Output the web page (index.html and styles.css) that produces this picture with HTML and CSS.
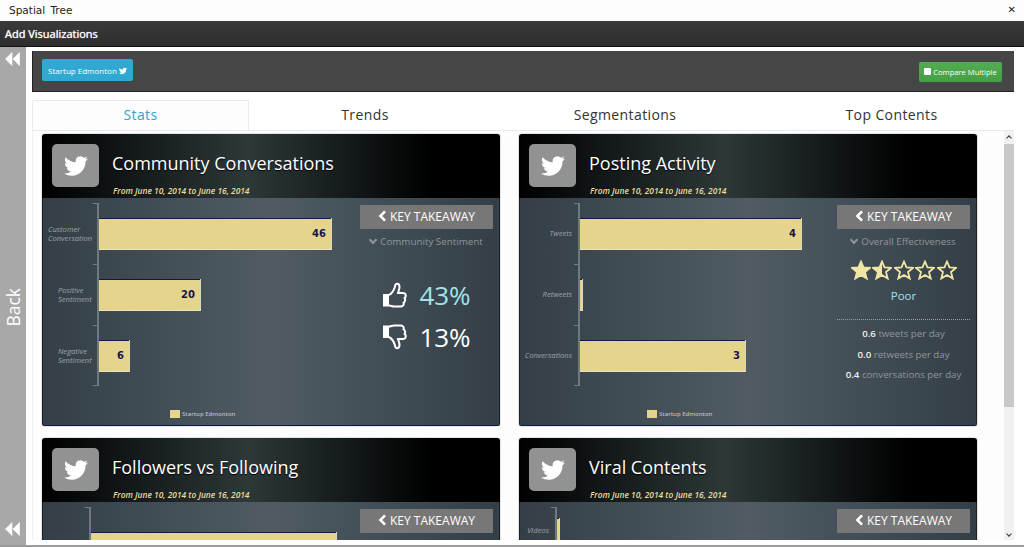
FILE: index.html
```html
<!doctype html>
<html lang="en">
<head>
  <title>Spatial Tree</title>
  <meta charset="utf-8" />
  <meta name="viewport" content="width=device-width,initial-scale=1" />
  <link rel="stylesheet" href="styles.css">
</head>
<body>
  <svg class="defs" width="0" height="0" aria-hidden="true">
    <symbol id="bird" viewBox="0 0 24 24">
      <path d="M23.953 4.57a10 10 0 01-2.825.775 4.958 4.958 0 002.163-2.723c-.951.555-2.005.959-3.127 1.184a4.92 4.92 0 00-8.384 4.482C7.69 8.095 4.067 6.13 1.64 3.162a4.822 4.822 0 00-.666 2.475c0 1.71.87 3.213 2.188 4.096a4.904 4.904 0 01-2.228-.616v.06a4.923 4.923 0 003.946 4.827 4.996 4.996 0 01-2.212.085 4.936 4.936 0 004.604 3.417 9.867 9.867 0 01-6.102 2.105c-.39 0-.779-.023-1.17-.067a13.995 13.995 0 007.557 2.209c9.053 0 13.998-7.496 13.998-13.985 0-.21 0-.42-.015-.63A9.935 9.935 0 0024 4.59z" fill="currentColor"/>
    </symbol>
    <symbol id="rewind" viewBox="0 0 15 14">
      <path d="M7 0.5 V13.5 L0.5 7 Z M14.5 0.5 V13.5 L8 7 Z" fill="currentColor" stroke="currentColor" stroke-width="0.6" stroke-linejoin="round"/>
    </symbol>
    <symbol id="chevron" viewBox="0 0 10 14">
      <path d="M8 1.5 L2.5 7 L8 12.5" fill="none" stroke="currentColor" stroke-width="3"/>
    </symbol>
    <symbol id="thumb" viewBox="0 0 25 26">
      <path d="M1 12 H7 V24.5 H1 Z" fill="currentColor"/>
      <path d="M7 13 C10 11.5 12 8 13 4.5 C13.3 0.8 17.5 1 17.5 5 C17.5 7.5 16.3 9.5 16 11 H21 C24 11 24.5 14.6 22.6 16 C23.8 18 22.8 20 21.6 20.6 C22.2 22.6 21 24.5 19 24.5 H12 C10 24.5 9 23.5 7 23.5" fill="none" stroke="currentColor" stroke-width="2"/>
    </symbol>
    <symbol id="star" viewBox="0 0 20 20">
      <polygon points="10,1.5 12.5,7.3 19,7.8 14,12 15.7,18.5 10,15 4.3,18.5 6,12 1,7.8 7.5,7.3" fill="none" stroke="currentColor" stroke-width="1.8"/>
    </symbol>
    <symbol id="star-half" viewBox="0 0 20 20">
      <polygon points="10,1.5 12.5,7.3 19,7.8 14,12 15.7,18.5 10,15 4.3,18.5 6,12 1,7.8 7.5,7.3" fill="none" stroke="currentColor" stroke-width="1.8"/>
      <polygon points="10,1.5 7.5,7.3 1,7.8 6,12 4.3,18.5 10,15" fill="currentColor"/>
    </symbol>
    <symbol id="star-full" viewBox="0 0 20 20">
      <polygon points="10,1.5 12.5,7.3 19,7.8 14,12 15.7,18.5 10,15 4.3,18.5 6,12 1,7.8 7.5,7.3" fill="currentColor" stroke="currentColor" stroke-width="1.8"/>
    </symbol>
  </svg>

  <header class="titlebar">
    <span>Spatial Tree</span>
    <span class="close">&#10005;</span>
  </header>
  <div class="addbar">Add Visualizations</div>

  <div class="window">
    <aside class="back">
      <svg class="rewind"><use href="#rewind"/></svg>
      <span class="back-label">Back</span>
      <svg class="rewind"><use href="#rewind"/></svg>
    </aside>

    <main class="content">
      <div class="toolbar">
        <button class="btn btn-blue">Startup Edmonton <svg class="btn-bird"><use href="#bird"/></svg></button>
        <button class="btn btn-green"><i class="check"></i>Compare Multiple</button>
      </div>

      <nav class="tabs">
        <a class="tab active">Stats</a>
        <a class="tab">Trends</a>
        <a class="tab">Segmentations</a>
        <a class="tab">Top Contents</a>
      </nav>

      <div class="scroller">
        <div class="cards">

          <section class="card">
            <div class="card-head">
              <div class="card-icon"><svg><use href="#bird"/></svg></div>
              <div>
                <h2>Community Conversations</h2>
                <p class="range">From June 10, 2014 to June 16, 2014</p>
              </div>
            </div>
            <div class="card-body">
              <div class="chart labels-55">
                <div class="row">
                  <span class="row-label">Customer Conversation</span>
                  <div class="plot"><div class="bar" style="width:232px"><b>46</b></div></div>
                </div>
                <div class="row">
                  <span class="row-label">Positive Sentiment</span>
                  <div class="plot"><div class="bar" style="width:101px"><b>20</b></div></div>
                </div>
                <div class="row">
                  <span class="row-label">Negative Sentiment</span>
                  <div class="plot"><div class="bar" style="width:30px"><b>6</b></div></div>
                </div>
                <div class="legend"><i></i>Startup Edmonton</div>
              </div>
              <div class="takeaway">
                <button class="key"><svg><use href="#chevron"/></svg>KEY TAKEAWAY</button>
                <div class="sub"><span class="caret"></span>Community Sentiment</div>
                <div class="votes">
                  <div class="vote up"><svg><use href="#thumb"/></svg><span>43%</span></div>
                  <div class="vote"><svg class="flip"><use href="#thumb"/></svg><span>13%</span></div>
                </div>
              </div>
            </div>
          </section>

          <section class="card">
            <div class="card-head">
              <div class="card-icon"><svg><use href="#bird"/></svg></div>
              <div>
                <h2>Posting Activity</h2>
                <p class="range">From June 10, 2014 to June 16, 2014</p>
              </div>
            </div>
            <div class="card-body">
              <div class="chart labels-59">
                <div class="row">
                  <span class="row-label">Tweets</span>
                  <div class="plot"><div class="bar" style="width:221px"><b>4</b></div></div>
                </div>
                <div class="row">
                  <span class="row-label">Retweets</span>
                  <div class="plot"><div class="bar" style="width:2px"></div></div>
                </div>
                <div class="row">
                  <span class="row-label">Conversations</span>
                  <div class="plot"><div class="bar" style="width:165px"><b>3</b></div></div>
                </div>
                <div class="legend"><i></i>Startup Edmonton</div>
              </div>
              <div class="takeaway">
                <button class="key"><svg><use href="#chevron"/></svg>KEY TAKEAWAY</button>
                <div class="sub"><span class="caret"></span>Overall Effectiveness</div>
                <div class="stars">
                  <svg><use href="#star-full"/></svg>
                  <svg><use href="#star-half"/></svg>
                  <svg><use href="#star"/></svg>
                  <svg><use href="#star"/></svg>
                  <svg><use href="#star"/></svg>
                </div>
                <div class="rating">Poor</div>
                <ul class="rates">
                  <li><b>0.6</b> tweets per day</li>
                  <li><b>0.0</b> retweets per day</li>
                  <li><b>0.4</b> conversations per day</li>
                </ul>
              </div>
            </div>
          </section>

          <section class="card">
            <div class="card-head">
              <div class="card-icon"><svg><use href="#bird"/></svg></div>
              <div>
                <h2>Followers vs Following</h2>
                <p class="range">From June 10, 2014 to June 16, 2014</p>
              </div>
            </div>
            <div class="card-body">
              <div class="chart labels-47">
                <div class="row row-tall">
                  <span class="row-label"></span>
                  <div class="plot"><div class="bar" style="width:245px"></div></div>
                </div>
              </div>
              <div class="takeaway">
                <button class="key"><svg><use href="#chevron"/></svg>KEY TAKEAWAY</button>
              </div>
            </div>
          </section>

          <section class="card">
            <div class="card-head">
              <div class="card-icon"><svg><use href="#bird"/></svg></div>
              <div>
                <h2>Viral Contents</h2>
                <p class="range">From June 10, 2014 to June 16, 2014</p>
              </div>
            </div>
            <div class="card-body">
              <div class="chart labels-36">
                <div class="row row-short">
                  <span class="row-label">Videos</span>
                  <div class="plot"><div class="bar" style="width:2px"></div></div>
                </div>
              </div>
              <div class="takeaway">
                <button class="key"><svg><use href="#chevron"/></svg>KEY TAKEAWAY</button>
              </div>
            </div>
          </section>

        </div>

        <div class="scrollbar">
          <span class="arrow arrow-up"></span>
          <span class="thumb"></span>
          <span class="arrow arrow-down"></span>
        </div>
      </div>
    </main>
  </div>
</body>
</html>
```

FILE: styles.css
```css
* {
  box-sizing: border-box;
}

html,
body {
  margin: 0;
  padding: 0;
  height: 100%;
  overflow: hidden;
}

body {
  display: flex;
  flex-direction: column;
  height: 547px;
  background: white;
  border-bottom: 2px solid #9a9a9a;
  font-family: "Open Sans", "Liberation Sans", sans-serif;
}

.defs {
  position: absolute;
}

.titlebar {
  display: flex;
  justify-content: space-between;
  align-items: center;
  flex: 0 0 21px;
  padding: 0 8px 2px 9px;
  font-family: "DejaVu Sans", sans-serif;
  font-size: 10.5px;
  color: #222;
  background: #fdfdfd;
  word-spacing: 2px;
}

.close {
  font-size: 10px;
  font-weight: bold;
}

.addbar {
  flex: 0 0 26px;
  padding: 0 5px;
  line-height: 25px;
  font-size: 11px;
  color: white;
  text-shadow: 0 0 1px #fff;
  background: linear-gradient(#3a3a3a, #2e2e2e);
  border-bottom: 1px solid #111;
}

.window {
  display: flex;
  flex: 1;
  min-height: 0;
}

.back {
  display: flex;
  flex-direction: column;
  justify-content: space-between;
  align-items: center;
  flex: 0 0 26px;
  padding: 5px 0 9px;
  background: #a8a8a8;
  color: white;
}

.rewind {
  width: 15px;
  height: 14px;
  margin-right: 2px;
}

.back-label {
  writing-mode: vertical-rl;
  transform: rotate(180deg);
  font-size: 17.5px;
  margin-top: 26px;
}

.content {
  display: flex;
  flex-direction: column;
  width: 982px;
  margin: 4px 0 5px 6px;
}

.toolbar {
  display: flex;
  justify-content: space-between;
  align-items: center;
  flex: 0 0 41px;
  padding: 0 12px 0 9px;
  background: #464646;
  border-left: 1px solid #222;
  border-bottom: 1px solid #222;
}

.btn {
  border: 0;
  border-radius: 2px;
  color: white;
  font-family: inherit;
  font-size: 8px;
  padding: 0;
}

.btn-blue {
  width: 91px;
  height: 22px;
  background: #30a8d2;
  margin-top: -2px;
}

.btn-bird {
  width: 8px;
  height: 8px;
  vertical-align: -1px;
}

.btn-green {
  width: 83px;
  height: 20px;
  font-size: 7.6px;
  background: linear-gradient(#52ad52, #459f45);
  margin-top: 1px;
}

.check {
  display: inline-block;
  width: 7px;
  height: 7px;
  margin-right: 2px;
  background: white;
  border-radius: 1px;
}

.tabs {
  display: grid;
  grid-template-columns: 217px 232px 288px 245px;
  flex: 0 0 30px;
  margin-top: 8px;
}

.tab {
  text-align: center;
  font-size: 14px;
  line-height: 30px;
  letter-spacing: 0.4px;
  color: #333;
}

.tab.active {
  line-height: 28px;
  color: #31a5cc;
  background: #fdfdfd;
  border: 1px solid #eaeaea;
  border-bottom: 0;
  border-radius: 2px 2px 0 0;
}

.scroller {
  display: flex;
  flex: 1;
  min-height: 0;
  overflow: hidden;
  border-top: 1px solid #eaeaea;
  border-left: 1px solid #f0f0f0;
  background: #fdfdfd;
}

.cards {
  display: grid;
  grid-template-columns: 458px 458px;
  grid-auto-rows: 292px;
  gap: 12px 19px;
  flex: 1;
  padding: 3px 0 0 9px;
}

.card {
  display: flex;
  flex-direction: column;
  border-radius: 3px;
  overflow: hidden;
  box-shadow: 0 0 1px #111;
}

.card-head {
  display: flex;
  gap: 13px;
  flex: none;
  height: 64px;
  padding: 10px 10px 0;
  color: white;
  background: linear-gradient(90deg, #000 0%, #2d3838 45%, #000 85%);
}

.card-icon {
  display: flex;
  justify-content: center;
  align-items: center;
  flex: 0 0 47px;
  height: 43px;
  border-radius: 5px;
  background: #929292;
}

.card-icon svg {
  width: 24px;
  height: 24px;
  color: white;
}

.card-head h2 {
  margin: 0;
  font-size: 18px;
  font-weight: 400;
  line-height: 20px;
  padding-top: 9px;
  box-sizing: content-box;
  text-shadow: 0 1px 1px #000;
}

.range {
  margin: 12px 0 0 1px;
  font-size: 8.4px;
  line-height: 11px;
  font-style: italic;
  font-weight: 600;
  color: #e8dca0;
}

.card-body {
  display: flex;
  flex: 1;
  min-height: 0;
  background: linear-gradient(90deg, #333e47 0%, #505c62 50%, #333e47 100%);
  box-shadow: inset 1px 0 #1a2028, inset -1px 0 #1a2028, inset 0 -1px #0a1a40;
}

.chart {
  flex: 1;
  padding-top: 5px;
}

.row {
  display: grid;
  grid-template-columns: var(--labels) 1fr;
  height: 61px;
}

.row-tall {
  height: 110px;
}

.row-tall .bar {
  height: 60px;
}

.row-short {
  height: 46px;
}

.row-short .bar {
  height: 24px;
}

.labels-55 { --labels: 55px; }
.labels-59 { --labels: 59px; }
.labels-47 { --labels: 47px; }
.labels-36 { --labels: 36px; }

.row-label {
  align-self: center;
  padding: 0 6px 0 5px;
  text-align: right;
  font-size: 7.6px;
  line-height: 9px;
  font-style: italic;
  color: #9ea4a8;
}

.labels-55 .row-label {
  padding-left: 6px;
  text-align: left;
}

.labels-55 .row:nth-child(n+2) .row-label {
  padding-left: 16px;
}

.plot {
  position: relative;
  display: flex;
  align-items: center;
  border-left: 2px solid #6f7a80;
}

.plot::before {
  content: "";
  position: absolute;
  top: 0;
  left: -6px;
  width: 6px;
  height: 1px;
  background: #6f7a80;
}

.row:nth-last-child(2) .plot::after {
  content: "";
  position: absolute;
  bottom: 0;
  left: -6px;
  width: 6px;
  height: 1px;
  background: #6f7a80;
}

.bar {
  display: flex;
  justify-content: flex-end;
  align-items: center;
  height: 32px;
  background: #e5d48c;
  border-top: 1px solid #0b1c44;
  border-bottom: 1px solid #e9e4c8;
  box-shadow: 1px 0 0 #dcd8c0;
}

.bar b {
  padding-right: 5px;
  font-family: "DejaVu Sans", sans-serif;
  font-size: 10px;
  color: #14144e;
}

.legend {
  display: flex;
  align-items: center;
  gap: 2px;
  margin: 24px 0 0 128px;
  font-size: 6px;
  font-weight: 600;
  color: #b9bec0;
}

.legend i {
  width: 10px;
  height: 8px;
  background: #e5d48c;
}

.takeaway {
  flex: 0 0 133px;
  margin: 7px 7px 0 0;
  text-align: center;
}

.key {
  display: flex;
  justify-content: center;
  align-items: center;
  gap: 3px;
  width: 100%;
  height: 24px;
  padding: 0 0 2px;
  border: 0;
  font-family: inherit;
  font-size: 12px;
  color: white;
  background: #777;
}

.key svg {
  width: 9px;
  height: 12px;
}

.sub {
  margin-top: 5px;
  font-size: 9.8px;
  line-height: 16px;
  color: #8f969b;
}

.caret {
  display: inline-block;
  width: 6px;
  height: 6px;
  margin: 0 4px 2px 0;
  border-right: 2px solid #8f969b;
  border-bottom: 2px solid #8f969b;
  transform: rotate(45deg);
}

.votes {
  display: flex;
  flex-direction: column;
  align-items: center;
  gap: 15px;
  margin-top: 31px;
}

.vote {
  display: flex;
  align-items: center;
  gap: 12px;
  height: 27px;
  font-size: 26px;
  color: white;
}

.vote svg {
  width: 25px;
  height: 26px;
}

.flip {
  transform: scaleY(-1);
}

.vote.up span {
  color: #a0e4ea;
}

.stars {
  display: flex;
  justify-content: center;
  gap: 1.5px;
  margin-top: 10px;
  color: #f1e6a4;
}

.stars svg {
  width: 20px;
  height: 20px;
}

.rating {
  margin-top: 8px;
  font-size: 11.5px;
  line-height: 16px;
  color: #a0e0e8;
}

.rates {
  margin: 15px 0 0;
  padding: 4px 0 0;
  list-style: none;
  border-top: 1px dotted #9aa1a5;
  font-size: 9.7px;
  line-height: 20.5px;
  color: #8f969b;
}

.rates b {
  font-weight: 600;
  color: #eef2f4;
}

.scrollbar {
  display: flex;
  flex-direction: column;
  align-items: center;
  flex: 0 0 10px;
  background: #f1f1f1;
}

.thumb {
  width: 100%;
  height: 263px;
  margin-top: 4px;
  background: #c8c8c8;
}

.arrow {
  width: 4px;
  height: 4px;
  border-left: 1px solid #333;
  border-top: 1px solid #333;
}

.arrow-up {
  margin-top: 5px;
  transform: rotate(45deg);
}

.arrow-down {
  margin-top: auto;
  margin-bottom: 4px;
  transform: rotate(225deg);
}
```
